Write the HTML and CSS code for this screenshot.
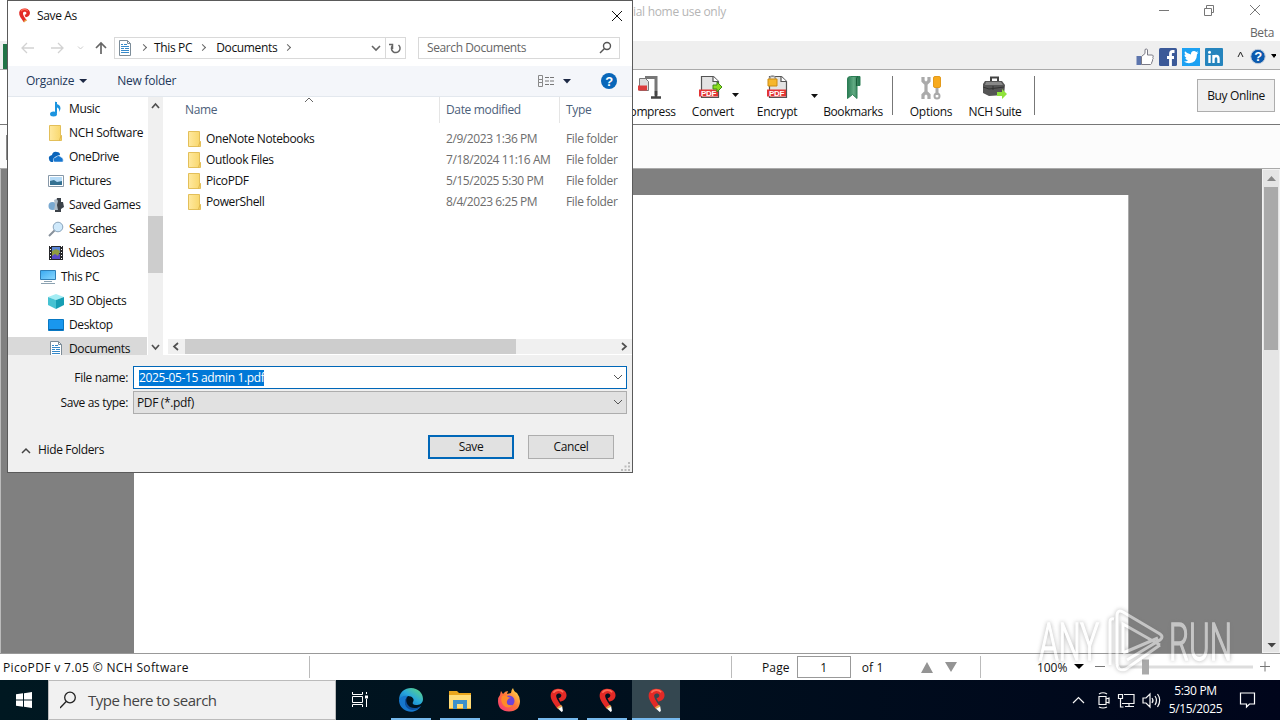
FILE: index.html
```html
<!DOCTYPE html>
<html lang="en">

<head>
    <meta charset="utf-8">
    <title>PicoPDF - Save As</title>
    <link rel="stylesheet" href="styles.css">
</head>

<body>
    <svg class="defs" width="0" height="0">
        <defs>
            <linearGradient id="gfolder" x1="0" x2="1"><stop offset="0" stop-color="#ffe9a0"/><stop offset="1" stop-color="#f8d669"/></linearGradient>
            <linearGradient id="gedge" x1="0" y1="1" x2="1" y2="0"><stop offset="0" stop-color="#0b63bd"/><stop offset=".5" stop-color="#28a8dc"/><stop offset="1" stop-color="#65dc75"/></linearGradient>
            <linearGradient id="gfox" x1="0" y1="1" x2="1" y2="0"><stop offset="0" stop-color="#f5317f"/><stop offset=".5" stop-color="#ff7139"/><stop offset="1" stop-color="#fff04b"/></linearGradient>
            <linearGradient id="gscreen" x1="0" y1="0" x2="1" y2="1"><stop offset="0" stop-color="#38a9f0"/><stop offset="1" stop-color="#8bd8ff"/></linearGradient>
            <linearGradient id="gbook" x1="0" x2="1"><stop offset="0" stop-color="#2b7c55"/><stop offset=".5" stop-color="#62ab83"/><stop offset="1" stop-color="#1d6b45"/></linearGradient>
        </defs>
        <symbol id="folder" viewBox="0 0 16 16"><path d="M1.500.5h11v10h1v5h-12z" fill="url(#gfolder)" stroke="#e3bf59"/><path d="M13 10.500l-1.500 5" fill="none" stroke="#dfb64a"/></symbol>
        <symbol id="doc" viewBox="0 0 16 16"><path d="M2.500.5h8l3 3v12h-11z" fill="#fff" stroke="#7c8c98"/><path d="M10.500.5v3h3" fill="none" stroke="#7c8c98"/><path d="M4 4.500h2M7 4.500h3M4 6.500h8M4 8.500h3M8 8.500h4M4 10.500h8M4 12.500h8" stroke="#3689c9"/></symbol>
        <symbol id="pico" viewBox="0 0 24 24"><path d="M11 20C7 14.500 4 10.500 4.500 6.500 5 2.800 8 .8 12 .8c5 0 8 3 7.700 6.700-.3 3.500-3.700 5.500-6.200 5.500l-1.500-3.500c1.500.3 3-1 2.700-2.700-.4-2-4.200-2.300-4.900.2-.4 2.800 2.700 6.500 5.200 10.500z" fill="#e32a26"/><path d="M7 4.500c2-3 7-3.500 9.500-.5" fill="none" stroke="#ff6b55" stroke-width="1.600"/><path d="M10.500 18.500l4-2.500 1.200 2-3.900 2.300z" fill="#e6a54c"/><path d="M11.700 20l3.900-2.300.6 4.300-1.200 1z" fill="#fff"/></symbol>
        <symbol id="pdfpage" viewBox="0 0 24 24"><path d="M3.500 1.500h12l5 5v16h-17z" fill="#e3e3e3" stroke="#545454" stroke-width="1.200"/><path d="M15 1.500v5h5.500" fill="#fff" stroke="#545454" stroke-width="1.200"/><rect x="1" y="14.500" width="19" height="7" fill="#e33434"/><text x="10.500" y="21" class="pdftag">PDF</text></symbol>
    </svg>

    <div class="app">
        <header class="titlebar">
            <span class="caption">ial home use only</span>
            <div class="titleright">
                <svg width="116" height="22" fill="none" stroke="#777"><path d="M10 10.500h10M55.500 8.500h7v7h-7zM57.500 8v-2.500h7v7h-2.500M101 5l10 10M111 5l-10 10"/></svg>
                <span class="beta">Beta</span>
            </div>
        </header>

        <div class="menubar">
            <div class="tab"></div>
            <div class="social">
                <svg width="18" height="18" viewBox="0 0 18 18"><path d="M.5 8h5v9h-5z" fill="#5d75ad"/><path d="M5.500 8.500l3.500-3V1.500q2-1.500 2.500.5v5h5q1.500 1 .3 2.300 1 1.200-.3 2.400.5 1.500-.7 2.300.3 1.800-1.300 2.500h-9z" fill="#fff" stroke="#7a7a85"/></svg>
                <svg width="18" height="18" viewBox="0 0 18 18"><rect width="18" height="18" rx="1.500" fill="#3b5998"/><path d="M15.500 3.500h-2q-2 0-2 2.500v12M8 9.500h7" fill="none" stroke="#fff" stroke-width="2.800"/></svg>
                <svg width="18" height="18" viewBox="0 0 18 18"><rect width="18" height="18" fill="#1da1f2"/><path d="M2 13.500q3 0 4-1.200-2.500-.6-2.700-2.300h1.200Q2.300 8.800 2.400 6.700l1.200.3Q1.800 5 3 3.300 5.500 6.200 9 6.400 8.700 3 12 2.900q1.400 0 2.200 1l1.800-.6-1 1.600 1.500-.3-1.500 1.700Q14.800 15 7 15.200q-3 0-5-1.700z" fill="#fff"/></svg>
                <svg width="18" height="18" viewBox="0 0 18 18"><rect width="18" height="18" rx="1" fill="#2584bd"/><path d="M4.500 7v8M8.500 15V7M8.500 11q0-3 2.700-3 2.300 0 2.300 3v4" fill="none" stroke="#fff" stroke-width="2.400"/><circle cx="4.500" cy="4.300" r="1.500" fill="#fff"/></svg>
            </div>
            <svg class="helpers" width="42" height="20"><path d="M4 12l2.500-5 2.500 5" fill="none" stroke="#222"/><circle cx="24" cy="11.500" r="7.200" fill="#0c5aae" stroke="#c3cdda"/><text x="24" y="16" class="qmark">?</text><path d="M37 9h6l-3 4z"/></svg>
        </div>

        <div class="ribbon">
            <div class="tool compress">
                <svg width="26" height="26"><path d="M3.500 3.500h6l3 3v9h-9z" fill="#ddd" stroke="#777"/><path d="M2 10.500h9v5H2z" fill="#dc3c3c"/><path d="M9 2.500h11v18" fill="none" stroke="#777" stroke-width="3"/><path d="M15 22.500h10M20 16v6" stroke="#444" stroke-width="2.500"/></svg>
                <span>Compress</span>
            </div>
            <div class="tool">
                <svg width="26" height="26" class="shifted"><use href="#pdfpage" width="24" height="24"/><path d="M15 10h4V7l5 5-5 5v-3h-4z" fill="#8cdc20" stroke="#3f8d12"/></svg>
                <span>Convert</span>
                <i class="arrow"></i>
            </div>
            <div class="tool encrypt">
                <svg width="26" height="26"><use href="#pdfpage" x="2" width="24" height="24"/><path d="M5.500 5q0-4 3-4t3 4" fill="none" stroke="#999" stroke-width="1.500"/><path d="M4 4h9v7H4z" fill="#f6b72c" stroke="#cc8b12"/></svg>
                <span>Encrypt</span>
                <i class="arrow"></i>
            </div>
            <div class="tool bookmarks">
                <svg width="26" height="26"><path d="M7.500 23.500V4q0-2.500 3-2.500h9.500v9h-3v13l-4.500-4z" fill="url(#gbook)" stroke="#2c7e55"/><path d="M16.500 11V4q0-2 1.500-2.500" fill="none" stroke="#1a5d3a"/></svg>
                <span>Bookmarks</span>
            </div>
            <div class="sep"></div>
            <div class="tool options">
                <svg width="26" height="26" fill="none" stroke="#aaa"><path d="M5 2v4l3 3 3-3V2M8 8v9M5 24v-4l3-3 3 3v4" stroke-width="3.200"/><path d="M19 13v7" stroke-width="3"/><circle cx="19" cy="21" r="2.500" stroke-width="2"/><rect x="15.500" y="1.500" width="7" height="11" rx="1.500" fill="#f7aa1d" stroke="#e39a1b"/></svg>
                <span>Options</span>
            </div>
            <div class="tool suite">
                <svg width="28" height="26"><path d="M10 7V2.500h7V7" fill="none" stroke="#444" stroke-width="2"/><path d="M4 6h17l3 4-1 10-15 1-6-3V9z" fill="#555"/><path d="M5 7h15l2 3H4z" fill="#888"/><path d="M2 12l6 2 15-2M12 11v4" stroke="#333" fill="none"/><path d="M16 17h5v-3l5 5-5 5v-3h-5z" fill="#90e33b"/></svg>
                <span>NCH Suite</span>
            </div>
            <div class="sep last"></div>
            <button class="buy">Buy Online</button>
        </div>

        <div class="subbar"><div class="edge"></div></div>

        <main class="viewer">
            <div class="canvas"><div class="page"></div></div>
            <div class="vscroll">
                <svg width="17" height="17"><path d="M4 11l4.500-5 4.500 5z" fill="#888"/></svg>
                <div class="thumb"></div>
                <svg width="17" height="15"><path d="M4.500 6h8.500l-4.200 4.500z" fill="#444"/></svg>
            </div>
        </main>

        <footer class="status">
            <div class="version">PicoPDF v 7.05 © NCH Software</div>
            <div class="middle"></div>
            <div class="pager">
                <span>Page</span>
                <div class="pageno">1</div>
                <span>of 1</span>
                <svg width="40" height="14"><path d="M1 13h12l-6-11zM25 2h12l-6 10z" fill="#949494"/></svg>
            </div>
            <div class="zoomer">
                <span>100%</span>
                <svg width="200" height="24"><path d="M2 9h10l-5 5z"/><path d="M23 11.500h10" stroke="#777"/><path d="M46 12h135" stroke="#ddd" stroke-width="3"/><path d="M70 4.500h7v15h-7z" fill="#aaa"/><path d="M188 11.500h10M193 6.500v10" stroke="#777"/></svg>
            </div>
        </footer>

        <div class="taskbar">
            <div class="start"><svg width="16" height="16" fill="#fff"><path d="M0 2.300l7-1v6.200H0zM8 1.200L16 0v7.500H8zM0 8.500h7v6.200l-7-1zM8 8.500h8V16l-8-1.200z"/></svg></div>
            <div class="search">
                <svg width="18" height="18" fill="none" stroke="#222" stroke-width="1.300"><circle cx="10" cy="6.500" r="5.300"/><path d="M6.200 10.500L0 17"/></svg>
                <span>Type here to search</span>
            </div>
            <div class="taskview"><svg width="18" height="18" fill="none" stroke="#fff"><path d="M1.500 1v2.500h10V1M1.500 5.500h10v6h-10zM1.500 16v-2.500h10V16M15.500 1v2M15.500 8v8"/><path d="M14 4.500h3v3h-3z" fill="#fff" stroke="none"/></svg></div>
            <div class="task open"><svg width="26" height="26" viewBox="0 0 26 26"><path d="M1 13C1 5 7 1 13 1c7 0 12 5 12 11 0 5-4 6-7 6s-4-1.500-3-3c2-3-1-6-5-6-5 0-8 3-9 4z" fill="url(#gedge)"/><path d="M1 13c1-3 5-5 9-4-4 3-4 13 5 13 3 0 6-1 8-3-4 6-10 6.500-14 5-5-2-8-6-8-11z" fill="#1677cc"/><path d="M10 9c-3 3-2 8 2 11 4 2 8 1 11-1-2 3-5 4-9 4-8-1-9-10-4-14z" fill="#0d4f9e"/></svg></div>
            <div class="task open"><svg width="24" height="22" viewBox="0 0 24 22"><path d="M1 2h8l2 2h12v16H1z" fill="#e9a51c"/><path d="M1 6h22v13H1z" fill="#ffdc78"/><path d="M5 20v-9h14v9h-4v-5H9v5z" fill="#3e91cb"/><path d="M9 15h6v4H9z" fill="#ffdc78"/></svg></div>
            <div class="task"><svg width="24" height="24" viewBox="0 0 24 24"><path d="M3 7l1-4 2 3q2-3 5-3l-1 3 4-1q0-3 2-5 1 4 4 5 3 4 3 8 0 10-11 10.500Q1 23 1 13q0-4 2-6z" fill="url(#gfox)"/><circle cx="12" cy="13" r="5.500" fill="#6d43d9"/><path d="M5 8q4-2 6 1l3 1q-3 0-4 3-1 5 6 4-5 5-10 0-3-4-1-9z" fill="#ff8a28"/></svg></div>
            <div class="task open"><svg width="25" height="25"><use href="#pico"/></svg></div>
            <div class="task open"><svg width="25" height="25"><use href="#pico"/></svg></div>
            <div class="task open active"><svg width="25" height="25"><use href="#pico"/></svg></div>
            <svg class="tray" width="96" height="24" fill="none" stroke="#f4f4f4" stroke-width="1.200"><path d="M4 15l5.500-5.500L15 15M30 8.500h7v8h-7zM37 11l3-1v5l-3-1M30 6q4-2.500 8 0M30 19q4 2 8 0M55 6.500h10v9H53M60 15.500v3M56 18.500h9M49.500 6.500h4v4h-4zM51.500 10v9h3M74 10h3l4-4v13l-4-4h-3zM83 10q2 2.500 0 5M86 8q3 4 0 9M88.500 6q4.500 6 0 13"/></svg>
            <div class="clock"><span>5:30 PM</span><span>5/15/2025</span></div>
            <svg class="notify" width="18" height="18" fill="none" stroke="#fff" stroke-width="1.200"><path d="M1.500 2h14v11h-5l-3 3v-3h-6z"/></svg>
        </div>
    </div>

    <section class="dialog">
        <div class="dlgtitle">
            <svg width="17" height="17"><use href="#pico"/></svg>
            <span>Save As</span>
            <svg width="12" height="12" class="close"><path d="M1 1l10 10M11 1L1 11" stroke="#111" fill="none"/></svg>
        </div>
        <div class="navrow">
            <svg width="94" height="20" fill="none"><path d="M14 10H2M7 5l-5 5 5 5M31 10h12M38 5l5 5-5 5" stroke="#d2d2d2" stroke-width="1.300"/><path d="M58 8.500l2.500 2.500L63 8.500" stroke="#ccc"/><path d="M81 16V5M76 10l5-5 5 5" stroke="#666" stroke-width="1.700"/></svg>
            <div class="address">
                <svg width="16" height="16"><use href="#doc"/></svg>
                <b></b><span class="pc">This PC</span><b></b><span class="docs">Documents</span><b></b>
                <svg class="drop" width="10" height="8" fill="none" stroke="#666" stroke-width="1.600"><path d="M1 2l4 4 4-4"/></svg>
                <div class="refresh"><svg width="14" height="14" fill="none" stroke="#666" stroke-width="1.500"><path d="M10.500 4A4.300 4.300 0 1 1 4.500 4.500M4.500 8V3.500H1"/></svg></div>
            </div>
            <div class="find"><span>Search Documents</span><svg width="13" height="13" fill="none" stroke="#555" stroke-width="1.400"><circle cx="8" cy="5" r="3.500"/><path d="M5.500 7.500L1 12"/></svg></div>
        </div>
        <div class="commands">
            <span>Organize</span><i class="arrow"></i>
            <span class="newfolder">New folder</span>
            <svg class="views" width="82" height="20"><path d="M1.500 4.500h4v4h-4zM1.500 8.500h4v3h-4zM1.500 11.500h4v4h-4z" fill="none" stroke="#888"/><path d="M8 6.500h4M13 6.500h4M8 10h4M13 10h4M8 13.500h4M13 13.500h4" stroke="#777"/><path d="M26 8h8l-4 4.500z" fill="#1d2945"/><circle cx="72" cy="10" r="8" fill="#0967b9"/><text x="72" y="15" class="qmark">?</text></svg>
        </div>
        <div class="browse">
            <div class="tree">
                <div class="node"><svg width="16" height="16"><path d="M8 1v11" stroke="#1c94df" stroke-width="2"/><ellipse cx="5.500" cy="13" rx="3.500" ry="2.500" fill="#1c94df"/><path d="M7 0q1 3 4 4 3 3 0 7 1-4-3-5z" fill="#1c94df"/></svg><span>Music</span></div>
                <div class="node"><svg width="16" height="16"><use href="#folder"/></svg><span>NCH Software</span></div>
                <div class="node"><svg width="16" height="16"><path d="M1 10q-1-3 3-4 1-4 5-3 3 0 3 3l-5 2-2 5H3q-2-1-2-3z" fill="#0a64ba"/><path d="M6 13q-2-4 2-5 2-3 5 0 3 1 2 5z" fill="#1676cf" stroke="#fff" stroke-width=".5"/></svg><span>OneDrive</span></div>
                <div class="node"><svg width="16" height="16"><path d="M.5 2.500h15v11H.5z" fill="#fff" stroke="#8798a8"/><path d="M2 4h12v8H2z" fill="#b6dbf7"/><path d="M2 8l4-1 3 2 5-1v4H2z" fill="#347091"/></svg><span>Pictures</span></div>
                <div class="node"><svg width="16" height="16"><circle cx="4.500" cy="9" r="4" fill="#79a9d1"/><path d="M9 1h4v4h2l1 5-3 2v3H7V8z" fill="#3c4249"/><path d="M6 3q3-2 4 1l-1 4 1 5H6l1-5z" fill="#aebcc8"/></svg><span>Saved Games</span></div>
                <div class="node"><svg width="16" height="16"><path d="M7 9l-6 6" stroke="#87919b" stroke-width="2"/><circle cx="10" cy="6" r="4.800" fill="#cfe9fb" stroke="#8aa4bb"/></svg><span>Searches</span></div>
                <div class="node"><svg width="16" height="16"><path d="M1 1h14v14H1z" fill="#26272a"/><path d="M4 2h8v6H4z" fill="#5a85d7"/><path d="M4 9h8v5H4z" fill="#584ac6"/><path d="M4 6l4-2 4 2-2 5-3-2-3 2z" fill="#8f9b3f"/><path d="M2.500 1v14M13.500 1v14" stroke="#fff" stroke-dasharray="1 2"/></svg><span>Videos</span></div>
                <div class="node pcnode"><svg width="16" height="16"><path d="M.5 1.500h15v9H.5z" fill="url(#gscreen)" stroke="#3080b8"/><path d="M4 12.500h8M1 14.500h14" stroke="#8ca2b1"/></svg><span>This PC</span></div>
                <div class="node"><svg width="16" height="16"><path d="M0 4l8-3 8 3-8 3z" fill="#a4edf4"/><path d="M0 4l8 3v9l-8-4z" fill="#46c2d2"/><path d="M16 4L8 7v9l8-4z" fill="#169eb4"/></svg><span>3D Objects</span></div>
                <div class="node"><svg width="16" height="16"><path d="M.5 2.500h15v11H.5z" fill="#1997ee" stroke="#0878c3"/><path d="M1 12.500h14" stroke="#0c5ea0"/></svg><span>Desktop</span></div>
                <div class="node selected"><svg width="16" height="16"><use href="#doc"/></svg><span>Documents</span></div>
            </div>
            <div class="treescroll">
                <svg width="15" height="17"><path d="M4 11l3.500-4 3.500 4"/></svg>
                <div class="thumb"></div>
                <svg width="15" height="17"><path d="M4 7l3.500 4L11 7"/></svg>
            </div>
            <div class="files">
                <div class="head">
                    <span class="name">Name</span><span>Date modified</span><span>Type</span>
                    <svg class="sort" width="10" height="6" fill="none" stroke="#666"><path d="M1 5l4-4 4 4"/></svg>
                </div>
                <div class="rows">
                    <div class="file"><svg width="16" height="16"><use href="#folder"/></svg><span class="name">OneNote Notebooks</span><span class="date">2/9/2023 1:36 PM</span><span>File folder</span></div>
                    <div class="file"><svg width="16" height="16"><use href="#folder"/></svg><span class="name">Outlook Files</span><span class="date">7/18/2024 11:16 AM</span><span>File folder</span></div>
                    <div class="file"><svg width="16" height="16"><use href="#folder"/></svg><span class="name">PicoPDF</span><span class="date">5/15/2025 5:30 PM</span><span>File folder</span></div>
                    <div class="file"><svg width="16" height="16"><use href="#folder"/></svg><span class="name">PowerShell</span><span class="date">8/4/2023 6:25 PM</span><span>File folder</span></div>
                </div>
                <div class="hscroll">
                    <svg width="17" height="15"><path d="M10 4L6 7.500l4 3.500"/></svg>
                    <div class="thumb"></div>
                    <svg width="17" height="15"><path d="M7 4l4 3.500L7 11"/></svg>
                </div>
            </div>
        </div>
        <div class="fields">
            <label>File name:</label>
            <div class="combo edit"><mark>2025-05-15 admin 1.pdf</mark><svg width="10" height="7"><path d="M1 1l4 4 4-4"/></svg></div>
            <label>Save as type:</label>
            <div class="combo"><span>PDF (*.pdf)</span><svg width="10" height="7"><path d="M1 1l4 4 4-4"/></svg></div>
        </div>
        <div class="actions">
            <svg width="10" height="7" fill="none" stroke="#444" stroke-width="1.500"><path d="M1 6l4-4 4 4"/></svg>
            <span>Hide Folders</span>
            <button class="save">Save</button>
            <button>Cancel</button>
        </div>
        <svg class="grip" width="10" height="10" fill="#bbb"><path d="M7 0h2v2H7zM7 3.500h2v2H7zM7 7h2v2H7zM3.500 3.500h2v2h-2zM3.500 7h2v2h-2zM0 7h2v2H0z"/></svg>
    </section>

    <svg class="watermark" width="200" height="70" viewBox="0 0 200 70">
        <text x="4" y="53" textLength="60" lengthAdjust="spacingAndGlyphs">ANY</text>
        <text x="134" y="53" textLength="63" lengthAdjust="spacingAndGlyphs">RUN</text>
        <path d="M75 58V15q0-4 4-3M82 57V9q0-7 6-4l37 22q4 3 0 6L92 53M88 46V17l37 21M88 46l35-15M82 57q1 8 9 5l34-24"/>
    </svg>
</body>

</html>
```
FILE: styles.css
```css
* {
    box-sizing: border-box;
}

body {
    margin: 0;
    width: 1280px;
    height: 720px;
    overflow: hidden;
    position: relative;
    font-family: "Open Sans", "Noto Sans", sans-serif;
    font-size: 12px;
    letter-spacing: -0.35px;
    line-height: 16px;
    color: #111;
    white-space: nowrap;
}

svg {
    display: block;
    flex: none;
}

button {
    font: inherit;
    letter-spacing: inherit;
    color: inherit;
    padding: 0;
    border: 1px solid #adadad;
    background: #e1e1e1;
}

.defs {
    position: absolute;
}

.pdftag {
    font: bold 8px "Liberation Sans", sans-serif;
    fill: #fff;
    text-anchor: middle;
}

.qmark {
    font: bold 13px "Liberation Sans", sans-serif;
    fill: #fff;
    text-anchor: middle;
}

.arrow {
    width: 7px;
    height: 4px;
    background: #111;
    clip-path: polygon(0 0, 100% 0, 50% 100%);
}

/* main window */
.app {
    display: flex;
    flex-direction: column;
    height: 720px;
    background: #fff;
}

.titlebar {
    height: 41px;
    display: flex;
    justify-content: space-between;
    padding-left: 633px;
}

.caption {
    padding-top: 4px;
    color: #b5b5b5;
    letter-spacing: -0.3px;
}

.titleright {
    display: flex;
    flex-direction: column;
    align-items: flex-end;
    padding-right: 6px;
}

.titleright svg {
    margin-right: 9px;
}

.beta {
    margin-top: 3px;
    color: #666;
}

.menubar {
    height: 29px;
    display: flex;
    align-items: center;
    background: #efefef;
    border-bottom: 1px solid #aaa;
}

.tab {
    width: 60px;
    height: 25px;
    margin: 3px auto 0 3px;
    background: #217346;
}

.social {
    display: flex;
    gap: 5px;
    margin: 3px 11px 0 0;
}

.helpers {
    margin-right: 4px;
}

.ribbon {
    height: 55px;
    display: flex;
    padding: 5px 5px 0 617px;
    border-bottom: 1px solid #777;
}

.tool {
    width: 64px;
    display: flex;
    flex-direction: column;
    align-items: center;
    position: relative;
    letter-spacing: -0.25px;
}

.tool span {
    margin-top: 3px;
}

.compress,
.suite {
    letter-spacing: -0.4px;
}

.shifted {
    margin-right: 4px;
}

.tool .arrow {
    position: absolute;
    left: 51px;
    top: 18px;
    width: 7px;
}

.tool.encrypt .arrow {
    left: 66px;
    top: 19px;
}

.bookmarks {
    width: 72px;
    margin-left: 8px;
    letter-spacing: -0.4px;
}

.sep {
    width: 1px;
    height: 39px;
    margin: 1px 6px 0 3px;
    background: #777;
}

.sep.last {
    margin: 1px 162px 0 7px;
}

.buy {
    width: 78px;
    height: 33px;
    margin-top: 4px;
    background: #f0f0f0;
}

.subbar {
    height: 44px;
    padding: 10px 0 0 6px;
    background: #fcfcfc;
    border-bottom: 1px solid #aaa;
}

.edge {
    width: 1px;
    height: 25px;
    background: #888;
}

.viewer {
    height: 484px;
    display: flex;
    border-left: 1px solid #bbb;
    background: #808080;
}

.canvas {
    flex: 1;
    padding: 26px 0 0 133px;
}

.page {
    width: 995px;
    height: 100%;
    background: #fff;
    border-right: 1px solid #aaa;
}

.vscroll {
    width: 18px;
    display: flex;
    flex-direction: column;
    background: #e5e5e5;
    border: 1px solid #f2f2f2;
}

.vscroll .thumb {
    width: 14px;
    height: 163px;
    margin: 0 1px auto;
    background: #aaa;
}

.status {
    height: 27px;
    display: flex;
    border-top: 1px solid #999;
    letter-spacing: -0.05px;
}

.version {
    width: 310px;
    margin: 2px 0;
    padding: 4px 3px 0;
    border-right: 1px solid #bbb;
    letter-spacing: 0.35px;
}

.middle {
    width: 422px;
    margin: 2px 0;
    border-right: 1px solid #bbb;
}

.pager {
    width: 249px;
    margin: 2px 0;
    padding-left: 30px;
    display: flex;
    align-items: center;
    border-right: 1px solid #bbb;
}

.pager > span {
    padding-top: 2px;
    letter-spacing: 0.15px;
}

.pageno {
    width: 54px;
    height: 22px;
    line-height: 21px;
    text-align: center;
    border: 1px solid #999;
    margin: 0 11px 0 7px;
}

.pager svg {
    margin-left: 36px;
}

.zoomer {
    display: flex;
    align-items: center;
    padding-left: 56px;
}

.zoomer span {
    width: 35px;
    padding-top: 2px;
}

/* taskbar */
.taskbar {
    height: 40px;
    display: flex;
    align-items: center;
    background: linear-gradient(90deg, #001821, #00101e 50%, #00051b);
}

.start,
.taskview {
    width: 48px;
    display: flex;
    justify-content: center;
}

.search {
    width: 288px;
    height: 40px;
    padding-left: 11px;
    display: flex;
    align-items: center;
    gap: 10px;
    background: #f1f1f1;
    border: 1px solid #bbb;
    font-size: 15px;
    line-height: 20px;
    letter-spacing: -0.5px;
    color: #444;
}

.taskview {
    width: 51px;
    padding-right: 3px;
}

.task {
    width: 48px;
    height: 40px;
    display: flex;
    align-items: center;
    justify-content: center;
    margin-right: 1px;
}

.task.open {
    background: linear-gradient(#76b9ed, #76b9ed) bottom / 40px 2px no-repeat;
}

.task.open.active {
    background-color: #344750;
    background-size: 48px 2px;
    margin: 0;
}

.tray {
    margin-left: auto;
}

.clock {
    width: 61px;
    display: flex;
    flex-direction: column;
    align-items: center;
    gap: 2px;
    color: #fff;
}

.notify {
    margin: 0 23px 0 13px;
}

/* save dialog */
.dialog {
    position: absolute;
    left: 7px;
    top: 0;
    width: 626px;
    height: 473px;
    display: flex;
    flex-direction: column;
    background: #f0f0f0;
    border: 1px solid #5a5a5a;
}

.dlgtitle {
    height: 30px;
    display: flex;
    align-items: center;
    padding: 0 9px 0 8px;
    background: #fff;
}

.dlgtitle span {
    margin-left: 4px;
}

.close {
    margin-left: auto;
}

.navrow {
    height: 35px;
    display: flex;
    align-items: center;
    padding: 0 12px 2px;
    background: #fff;
}

.address {
    width: 292px;
    height: 22px;
    display: flex;
    align-items: center;
    border: 1px solid #d9d9d9;
    padding-left: 2px;
}

.address b {
    width: 5px;
    height: 5px;
    margin: 0 11px 0 8px;
    border: solid #666;
    border-width: 1.5px 1.5px 0 0;
    transform: rotate(45deg);
}

.address .pc {
    margin-left: -3px;
}

.address .drop {
    margin: 0 4px 0 auto;
}

.refresh {
    height: 20px;
    width: 20px;
    padding: 3px 2px;
    border-left: 1px solid #d9d9d9;
}

.find {
    width: 202px;
    height: 22px;
    display: flex;
    align-items: center;
    justify-content: space-between;
    margin-left: 12px;
    padding: 0 7px 0 8px;
    border: 1px solid #d9d9d9;
    color: #666;
    letter-spacing: -0.4px;
}

.commands {
    height: 31px;
    display: flex;
    align-items: center;
    padding: 0 13px 0 18px;
    background: #f4f6fa;
    border-bottom: 1px solid #e3e8ee;
    color: #1e395b;
    letter-spacing: -0.25px;
}

.commands .arrow {
    margin: 0 30px 0 5px;
    width: 8px;
    background: #1d2945;
}

.views {
    margin-left: auto;
}

.browse {
    height: 258px;
    display: flex;
    background: #fff;
}

.tree {
    width: 140px;
    height: 258px;
    overflow: hidden;
}

.node {
    height: 24px;
    display: flex;
    align-items: center;
    padding-left: 40px;
    gap: 5px;
}

.node.pcnode {
    padding-left: 32px;
}

.node.selected {
    width: 139px;
    background: #d9d9d9;
}

.treescroll {
    width: 15px;
    height: 258px;
    display: flex;
    flex-direction: column;
    background: #f0f0f0;
}

.treescroll .thumb {
    height: 57px;
    margin: 102px 0 auto;
    background: #cdcdcd;
}

.treescroll svg,
.hscroll svg {
    fill: none;
    stroke: #505050;
    stroke-width: 1.7;
}

.files {
    width: 469px;
    padding-left: 5px;
    display: flex;
    flex-direction: column;
}

.head {
    height: 26px;
    display: flex;
    position: relative;
    color: #4c607a;
    letter-spacing: -0.35px;
}

.head span {
    width: 120px;
    padding: 5px 0 0 6px;
    border-left: 1px solid #e5e5e5;
}

.head .name {
    width: 271px;
    padding-left: 17px;
    border: 0;
}

.head span:nth-child(3) {
    width: 70px;
}

.sort {
    position: absolute;
    left: 136px;
    top: 0;
}

.rows {
    flex: 1;
    padding: 5px 0 0 19px;
}

.file {
    height: 21px;
    display: flex;
    align-items: center;
    color: #6d6d6d;
    letter-spacing: -0.42px;
}

.file .name {
    width: 240px;
    margin-left: 3px;
    color: #111;
    letter-spacing: -0.38px;
}

.file .date {
    width: 120px;
}

.file span:last-child {
    letter-spacing: -0.35px;
}

.hscroll {
    height: 15px;
    margin-bottom: 1px;
    display: flex;
    background: #f0f0f0;
}

.hscroll .thumb {
    width: 331px;
    margin-right: auto;
    background: #cdcdcd;
}

.fields {
    display: grid;
    grid-template-columns: 120px 494px;
    grid-template-rows: 23px 23px;
    column-gap: 5px;
    row-gap: 2px;
    padding-top: 11px;
    align-items: center;
}

.fields label {
    text-align: right;
}

.combo {
    height: 23px;
    display: flex;
    align-items: center;
    justify-content: space-between;
    padding: 0 3px;
    border: 1px solid #adadad;
    background: #e1e1e1;
}

.combo.edit {
    padding-left: 5px;
    border-color: #0067b8;
    background: #fff;
}

.combo svg {
    fill: none;
    stroke: #555;
}

.combo mark {
    background: #0078d7;
    color: #fff;
    line-height: 16px;
}

.actions {
    display: flex;
    align-items: center;
    padding: 21px 18px 0 13px;
}

.actions span {
    margin: 6px auto 0 7px;
}

.actions svg {
    margin-top: 6px;
}

.actions button {
    width: 86px;
    height: 24px;
    margin-left: 14px;
}

.actions .save {
    border: 2px solid #0067b8;
}

.grip {
    position: absolute;
    right: 1px;
    bottom: 0;
}

/* logo laid over everything */
.watermark {
    position: absolute;
    left: 1035px;
    top: 607px;
    opacity: 0.55;
    fill: none;
    stroke: #fff;
    stroke-width: 3;
    filter: drop-shadow(0 0 2px #777);
}

.watermark text {
    font: 300 51px Roboto, sans-serif;
    fill: #fff;
    stroke-width: 1.6;
    letter-spacing: 0;
}
```
